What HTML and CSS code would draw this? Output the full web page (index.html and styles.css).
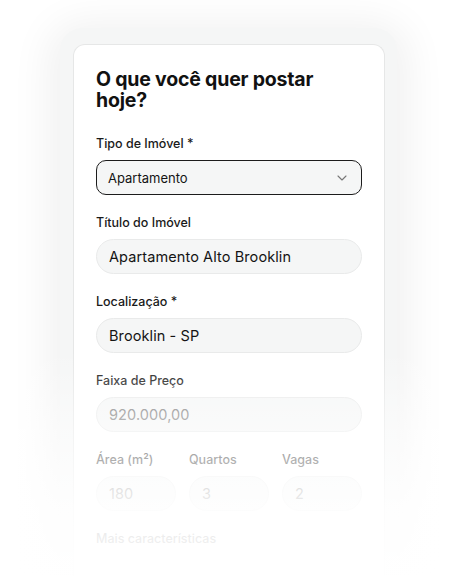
FILE: index.html
```html
<!DOCTYPE html>
<html lang="pt-BR">
<head>
  <meta charset="UTF-8">
  <meta name="viewport" content="width=device-width, initial-scale=1">
  <title>Postar imóvel</title>
  <link rel="stylesheet" href="styles.css">
</head>
<body>

  <div class="frame">
    <form class="card">
      <h1>O que você quer postar hoje?</h1>

      <div class="field">
        <label>Tipo de Imóvel *</label>
        <div class="select">
          <span>Apartamento</span>
          <svg width="10" height="6" viewBox="0 0 10 6"><path d="M1 1l4 4 4-4" fill="none" stroke="#777" stroke-width="1.1" stroke-linecap="round" stroke-linejoin="round"/></svg>
        </div>
      </div>

      <div class="field">
        <label>Título do Imóvel</label>
        <div class="input">Apartamento Alto Brooklin</div>
      </div>

      <div class="field">
        <label>Localização *</label>
        <div class="input">Brooklin - SP</div>
      </div>

      <div class="field">
        <label>Faixa de Preço</label>
        <div class="input muted">920.000,00</div>
      </div>

      <div class="row">
        <div class="field">
          <label>Área (m²)</label>
          <div class="input muted">180</div>
        </div>
        <div class="field">
          <label>Quartos</label>
          <div class="input muted">3</div>
        </div>
        <div class="field">
          <label>Vagas</label>
          <div class="input muted">2</div>
        </div>
      </div>

      <div class="field">
        <label>Mais características</label>
      </div>
    </form>
  </div>

  <div class="fade"></div>

</body>
</html>
```

FILE: styles.css
```css
body {
  margin: 0;
  background: #fff;
  font-family: Inter, "Noto Sans", sans-serif;
  color: #141414;
  height: 576px;
  overflow: hidden;
}
.frame {
  width: 337px;
  margin: 28px 0 0 60px;
  padding: 16px 12px 0 13px;
  box-sizing: border-box;
  height: 548px;
  background: #f5f6f6;
  border-radius: 22px 22px 0 0;
  box-shadow: 0 6px 40px 12px rgba(0, 0, 0, 0.06);
}
.card {
  box-sizing: border-box;
  height: 532px;
  overflow: hidden;
  background: #fff;
  border: 1px solid #e6e7e7;
  border-bottom: none;
  border-radius: 12px 12px 0 0;
  padding: 24px 22px 0 22px;
}
h1 {
  font-size: 19.5px;
  line-height: 21px;
  font-weight: 700;
  letter-spacing: -0.2px;
  margin: 0 0 25px 0;
  color: #111;
}
.field {
  margin-bottom: 20px;
}
label {
  display: block;
  font-size: 12.5px;
  font-weight: 500;
  line-height: 16px;
  margin-bottom: 8px;
  color: #1a1a1a;
}
.select, .input {
  height: 35px;
  box-sizing: border-box;
  display: flex;
  align-items: center;
  background: #f5f6f6;
}
.select {
  justify-content: space-between;
  padding: 0 14px 0 11px;
  border: 1px solid #1c1c1c;
  border-radius: 10px;
  font-size: 13px;
}
.input {
  padding: 0 12px;
  border: 1px solid #e9eaea;
  border-radius: 18px;
  font-size: 14.5px;
  letter-spacing: 0.1px;
}
.muted {
  color: #777;
}
.row {
  display: grid;
  grid-template-columns: 1fr 1fr 1fr;
  gap: 13px;
}
.fade {
  position: absolute;
  left: 0;
  right: 0;
  top: 350px;
  height: 226px;
  background: linear-gradient(to bottom, rgba(255,255,255,0) 0%, rgba(255,255,255,0.5) 35%, rgba(255,255,255,0.88) 70%, rgba(255,255,255,0.98) 100%);
}
```
